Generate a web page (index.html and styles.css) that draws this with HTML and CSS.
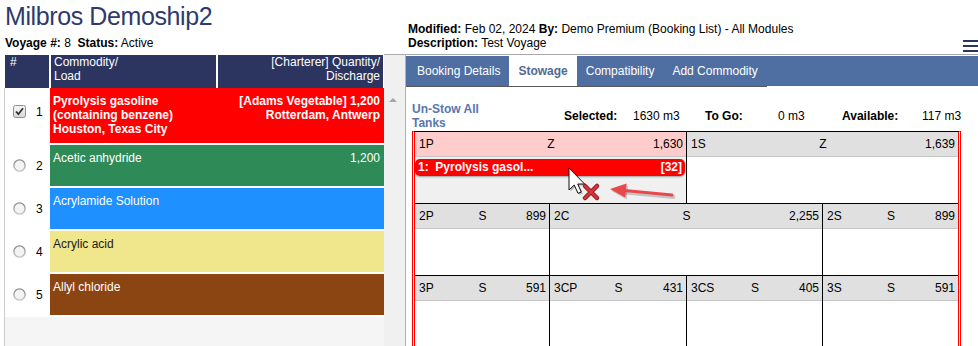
FILE: index.html
```html
<!DOCTYPE html>
<html lang="en">
<head>
  <meta charset="UTF-8" />
  <title>Milbros Demoship2 - Stowage</title>
  <link rel="stylesheet" href="styles.css">
</head>
<body>

  <div class="top">
    <div class="top-left">
      <h1 class="ship-name">Milbros Demoship2</h1>
      <div class="voyage"><b>Voyage #:</b> 8&nbsp; <b>Status:</b> Active</div>
    </div>
    <div class="top-right">
      <div class="meta-block">
        <div><b>Modified:</b> Feb 02, 2024 <b>By:</b> Demo Premium (Booking List) - All Modules</div>
        <div><b>Description:</b> Test Voyage</div>
      </div>
      <span class="menu-btn"><i></i><i></i><i></i></span>
    </div>
  </div>

  <div class="main">
    <div class="booking-list">
      <div class="list-head">
        <div class="num-h">#</div>
        <div>Commodity/<br>Load</div>
        <div class="qty-h">[Charterer] Quantity/<br>Discharge</div>
      </div>
      <div class="rows">
        <div class="row tall">
          <div class="pick">
            <svg width="13" height="13" viewBox="0 0 13 13"><defs><linearGradient id="cb" x1="0" y1="0" x2="0" y2="1"><stop offset="0" stop-color="#fafafa"/><stop offset="1" stop-color="#d6d6d6"/></linearGradient></defs><rect x="0.5" y="0.5" width="12" height="12" rx="2" fill="url(#cb)" stroke="#8e8e8e"/><path d="M3 6.5 L5.4 9.2 L10 3.2" fill="none" stroke="#333" stroke-width="1.8"/></svg>
            <span>1</span>
          </div>
          <div class="cargo red bold">
            <div>Pyrolysis gasoline (containing benzene)<br>Houston, Texas City</div>
            <div class="qty">[Adams Vegetable] 1,200<br>Rotterdam, Antwerp</div>
          </div>
        </div>
        <div class="row">
          <div class="pick">
            <svg width="13" height="13" viewBox="0 0 13 13"><defs><linearGradient id="rd" x1="0" y1="0" x2="0" y2="1"><stop offset="0" stop-color="#8a8a8a"/><stop offset="1" stop-color="#c8c8c8"/></linearGradient></defs><circle cx="6.5" cy="6.5" r="5.6" fill="#f3f3f3" stroke="url(#rd)" stroke-width="1.4"/></svg>
            <span>2</span>
          </div>
          <div class="cargo green">
            <div>Acetic anhydride</div>
            <div class="qty">1,200</div>
          </div>
        </div>
        <div class="row">
          <div class="pick">
            <svg width="13" height="13" viewBox="0 0 13 13"><circle cx="6.5" cy="6.5" r="5.6" fill="#f3f3f3" stroke="url(#rd)" stroke-width="1.4"/></svg>
            <span>3</span>
          </div>
          <div class="cargo blue">
            <div>Acrylamide Solution</div>
            <div class="qty"></div>
          </div>
        </div>
        <div class="row">
          <div class="pick">
            <svg width="13" height="13" viewBox="0 0 13 13"><circle cx="6.5" cy="6.5" r="5.6" fill="#f3f3f3" stroke="url(#rd)" stroke-width="1.4"/></svg>
            <span>4</span>
          </div>
          <div class="cargo khaki">
            <div>Acrylic acid</div>
            <div class="qty"></div>
          </div>
        </div>
        <div class="row">
          <div class="pick">
            <svg width="13" height="13" viewBox="0 0 13 13"><circle cx="6.5" cy="6.5" r="5.6" fill="#f3f3f3" stroke="url(#rd)" stroke-width="1.4"/></svg>
            <span>5</span>
          </div>
          <div class="cargo brown">
            <div>Allyl chloride</div>
            <div class="qty"></div>
          </div>
        </div>
      </div>
    </div>
    <div class="scroll-track"><span class="scroll-up"></span></div>

    <div class="voyage-panel">
      <div class="tab-bar">
        <ul class="tabs">
          <li>Booking Details</li>
          <li class="active">Stowage</li>
          <li>Compatibility</li>
          <li>Add Commodity</li>
        </ul>
      </div>

      <div class="stowage">
        <div class="stow-stats">
          <a class="unstow">Un-Stow All Tanks</a>
          <b>Selected:</b><span>1630 m3</span>
          <b>To Go:</b><span>0 m3</span>
          <b>Available:</b><span>117 m3</span>
        </div>

        <div class="tank-plan">
          <div class="tank-row">
            <div class="tank span-2 loaded">
              <div class="tank-head"><span>1P</span><span>Z</span><span class="cap">1,630</span></div>
              <div class="tank-body">
                <div class="cargo-tag"><span>1:  Pyrolysis gasol...</span><span>[32]</span></div>
                <svg class="drag-hint" width="120" height="45" viewBox="0 0 120 45">
                  <path d="M64 30.5 L112 35" stroke="#000" stroke-opacity="0.18" stroke-width="4" stroke-linecap="round" transform="translate(1.5 2)"/>
                  <path d="M50 29 L66.6 23.5 L65.2 37.5 Z" fill="#000" fill-opacity="0.18" transform="translate(1.5 2)"/>
                  <path d="M62 30.3 L112 35" stroke="#e9474b" stroke-width="3" stroke-linecap="round"/>
                  <path d="M50 29 L66.6 23.5 L65.2 37.5 Z" fill="#e9474b"/>
                  <path d="M9 8 L9 30 L14.2 25 L18 33.3 L21.3 32 L17.7 24 L24.6 24 Z" fill="#000" fill-opacity="0.25" transform="translate(1.5 1.5)"/>
                  <path d="M9 8 L9 30 L14.2 25 L18 33.3 L21.3 32 L17.7 24 L24.6 24 Z" fill="#fff" stroke="#111" stroke-width="1"/>
                  <path d="M25 26 L37 38 M37 26 L25 38" stroke="#9e1b20" stroke-width="4.5" stroke-linecap="round"/>
                  <path d="M25 26 L37 38 M37 26 L25 38" stroke="#d8383d" stroke-width="2.2" stroke-linecap="round"/>
                </svg>
              </div>
            </div>
            <div class="tank span-2">
              <div class="tank-head"><span>1S</span><span>Z</span><span class="cap">1,639</span></div>
              <div class="tank-body"></div>
            </div>
          </div>
          <div class="tank-row">
            <div class="tank">
              <div class="tank-head"><span>2P</span><span>S</span><span class="cap">899</span></div>
              <div class="tank-body"></div>
            </div>
            <div class="tank span-2">
              <div class="tank-head"><span>2C</span><span>S</span><span class="cap">2,255</span></div>
              <div class="tank-body"></div>
            </div>
            <div class="tank">
              <div class="tank-head"><span>2S</span><span>S</span><span class="cap">899</span></div>
              <div class="tank-body"></div>
            </div>
          </div>
          <div class="tank-row">
            <div class="tank">
              <div class="tank-head"><span>3P</span><span>S</span><span class="cap">591</span></div>
              <div class="tank-body"></div>
            </div>
            <div class="tank">
              <div class="tank-head"><span>3CP</span><span>S</span><span class="cap">431</span></div>
              <div class="tank-body"></div>
            </div>
            <div class="tank">
              <div class="tank-head"><span>3CS</span><span>S</span><span class="cap">405</span></div>
              <div class="tank-body"></div>
            </div>
            <div class="tank">
              <div class="tank-head"><span>3S</span><span>S</span><span class="cap">591</span></div>
              <div class="tank-body"></div>
            </div>
          </div>
        </div>
      </div>
    </div>
  </div>

</body>
</html>
```

FILE: styles.css
```css
/* --- Page --- */
html, body {
  margin: 0;
}
body {
  font: 12px "Liberation Sans", Arial, sans-serif;
  color: #000;
  background: #fff;
  width: 978px;
  height: 346px;
  overflow: hidden;
}

/* --- Voyage header --- */
.top {
  display: flex;
  height: 54px;
}
.top-left {
  width: 400px;
  padding-left: 5px;
}
.ship-name {
  margin: 0;
  padding-top: 1px;
  font: normal 25px/30px "Liberation Sans Narrow", "Liberation Sans", Arial, sans-serif;
  letter-spacing: -0.4px;
  color: #2e3a6c;
}
.voyage {
  margin-top: 5px;
  line-height: 14px;
}
.top-right {
  flex: 1;
  display: flex;
  padding-left: 3px;
}
.meta-block {
  flex: 1;
  padding-top: 22px;
  line-height: 14px;
}
.menu-btn {
  align-self: flex-end;
  margin-bottom: 2px;
  width: 15px;
  display: flex;
  flex-direction: column;
  gap: 3px;
}
.menu-btn i {
  display: block;
  height: 2px;
  background: #2c3560;
}

/* --- Main area --- */
.main {
  display: flex;
  height: 292px;
}

/* --- Booking list (left) --- */
.booking-list {
  margin-left: 5px;
  width: 379px;
  padding-top: 1px;
  display: flex;
  flex-direction: column;
}
.list-head {
  display: grid;
  grid-template-columns: 44px 165px 165px;
  column-gap: 2px;
  height: 33px;
  line-height: 14px;
  color: #fff;
}
.list-head div {
  background: #2c3460;
  padding: 0 3px;
}
.list-head .num-h { padding-left: 5px; }
.list-head .qty-h { text-align: right; }

.rows {
  flex: 1;
  margin-left: -1px;
  border-left: 1px solid #cdcdcd;
  background: #f5f5f5;
}
.row {
  display: grid;
  grid-template-columns: 45px 1fr;
  height: 41px;
  border-bottom: 2px solid #fff;
}
.row.tall { height: 55px; }
.pick {
  background: #fff;
  display: flex;
  align-items: center;
  gap: 10px;
  padding-left: 8px;
}
.row.tall .pick { padding-bottom: 8px; }
.pick svg { display: block; }
.cargo {
  display: grid;
  grid-template-columns: 1fr 1fr;
  padding: 6px 4px 0 3px;
  line-height: 14px;
  color: #fff;
}
.cargo .qty { text-align: right; }
.cargo.bold { font-weight: bold; }
.red { background: #ff0000; }
.green { background: #2e8b57; }
.blue { background: #1e90ff; }
.khaki { background: #f0e68c; color: #1a1a1a; }
.brown { background: #8b4513; }

.scroll-track {
  width: 21px;
  background: #f0f0f0;
  border-top: 1px solid #a9a9a9;
}
.scroll-up {
  display: block;
  width: 0;
  margin: 43px 0 0 5px;
  border-left: 4px solid transparent;
  border-right: 4px solid transparent;
  border-bottom: 4px solid #a6a6a6;
}

/* --- Voyage panel (right) --- */
.voyage-panel {
  flex: 1;
  border-left: 1px solid #aab2c4;
  border-top: 1px solid #a9a9a9;
  padding-top: 1px;
  overflow: hidden;
}
.tab-bar {
  height: 30px;
  background: #4f6fa2;
}
.tabs {
  display: inline-flex;
  height: 30px;
  margin: 0;
  padding: 0 0 0 2px;
  list-style: none;
  box-shadow: 0 1px 0 #5a5a5a;
}
.tabs li {
  padding: 0 9px;
  line-height: 30px;
  color: #fff;
}
.tabs li.active {
  background: #fff;
  color: #4e6a96;
  font-weight: bold;
}

.stowage {
  padding: 16px 17px 0 6px;
}
.stow-stats {
  display: grid;
  grid-template-columns: 152px 69px 72px 73px 64px 80px auto;
  align-items: center;
  height: 28px;
  margin-bottom: 1px;
  line-height: 14px;
  white-space: nowrap;
}
.unstow {
  width: 80px;
  color: #5876ab;
  font-weight: bold;
  white-space: normal;
}

/* --- Tank plan --- */
.tank-plan {
  border-top: 1px solid #000;
  border-left: 3px double #f00;
  border-right: 3px double #f00;
}
.tank-row {
  display: grid;
  grid-template-columns: 135px 137px 136px 135px;
  height: 71px;
}
.tank-row + .tank-row {
  border-top: 1px solid #000;
}
.tank {
  display: flex;
  flex-direction: column;
  border-right: 1px solid #000;
}
.tank:last-child { border-right: 0; }
.tank.span-2 { grid-column: span 2; }
.tank-head {
  height: 24px;
  display: grid;
  grid-template-columns: 1fr auto 1fr;
  align-items: center;
  padding: 0 3px 0 4px;
  background: #e0e0e0;
  border-bottom: 1px solid #c6c6c6;
}
.tank-head .cap { text-align: right; }
.tank-body {
  flex: 1;
  position: relative;
}
.tank.loaded .tank-head { background: #ffcccc; }
.tank.loaded .tank-body {
  background: #f0f0f0;
  padding: 2px 1px 0 0;
}
.cargo-tag {
  display: flex;
  justify-content: space-between;
  height: 17px;
  line-height: 17px;
  padding: 0 3px;
  background: #f00;
  color: #fff;
  font-weight: bold;
  white-space: pre;
  border-radius: 5px;
  box-shadow: 0 1px 2px rgba(0, 0, 0, 0.35);
}
.drag-hint {
  position: absolute;
  left: 145px;
  top: 3px;
}
```
